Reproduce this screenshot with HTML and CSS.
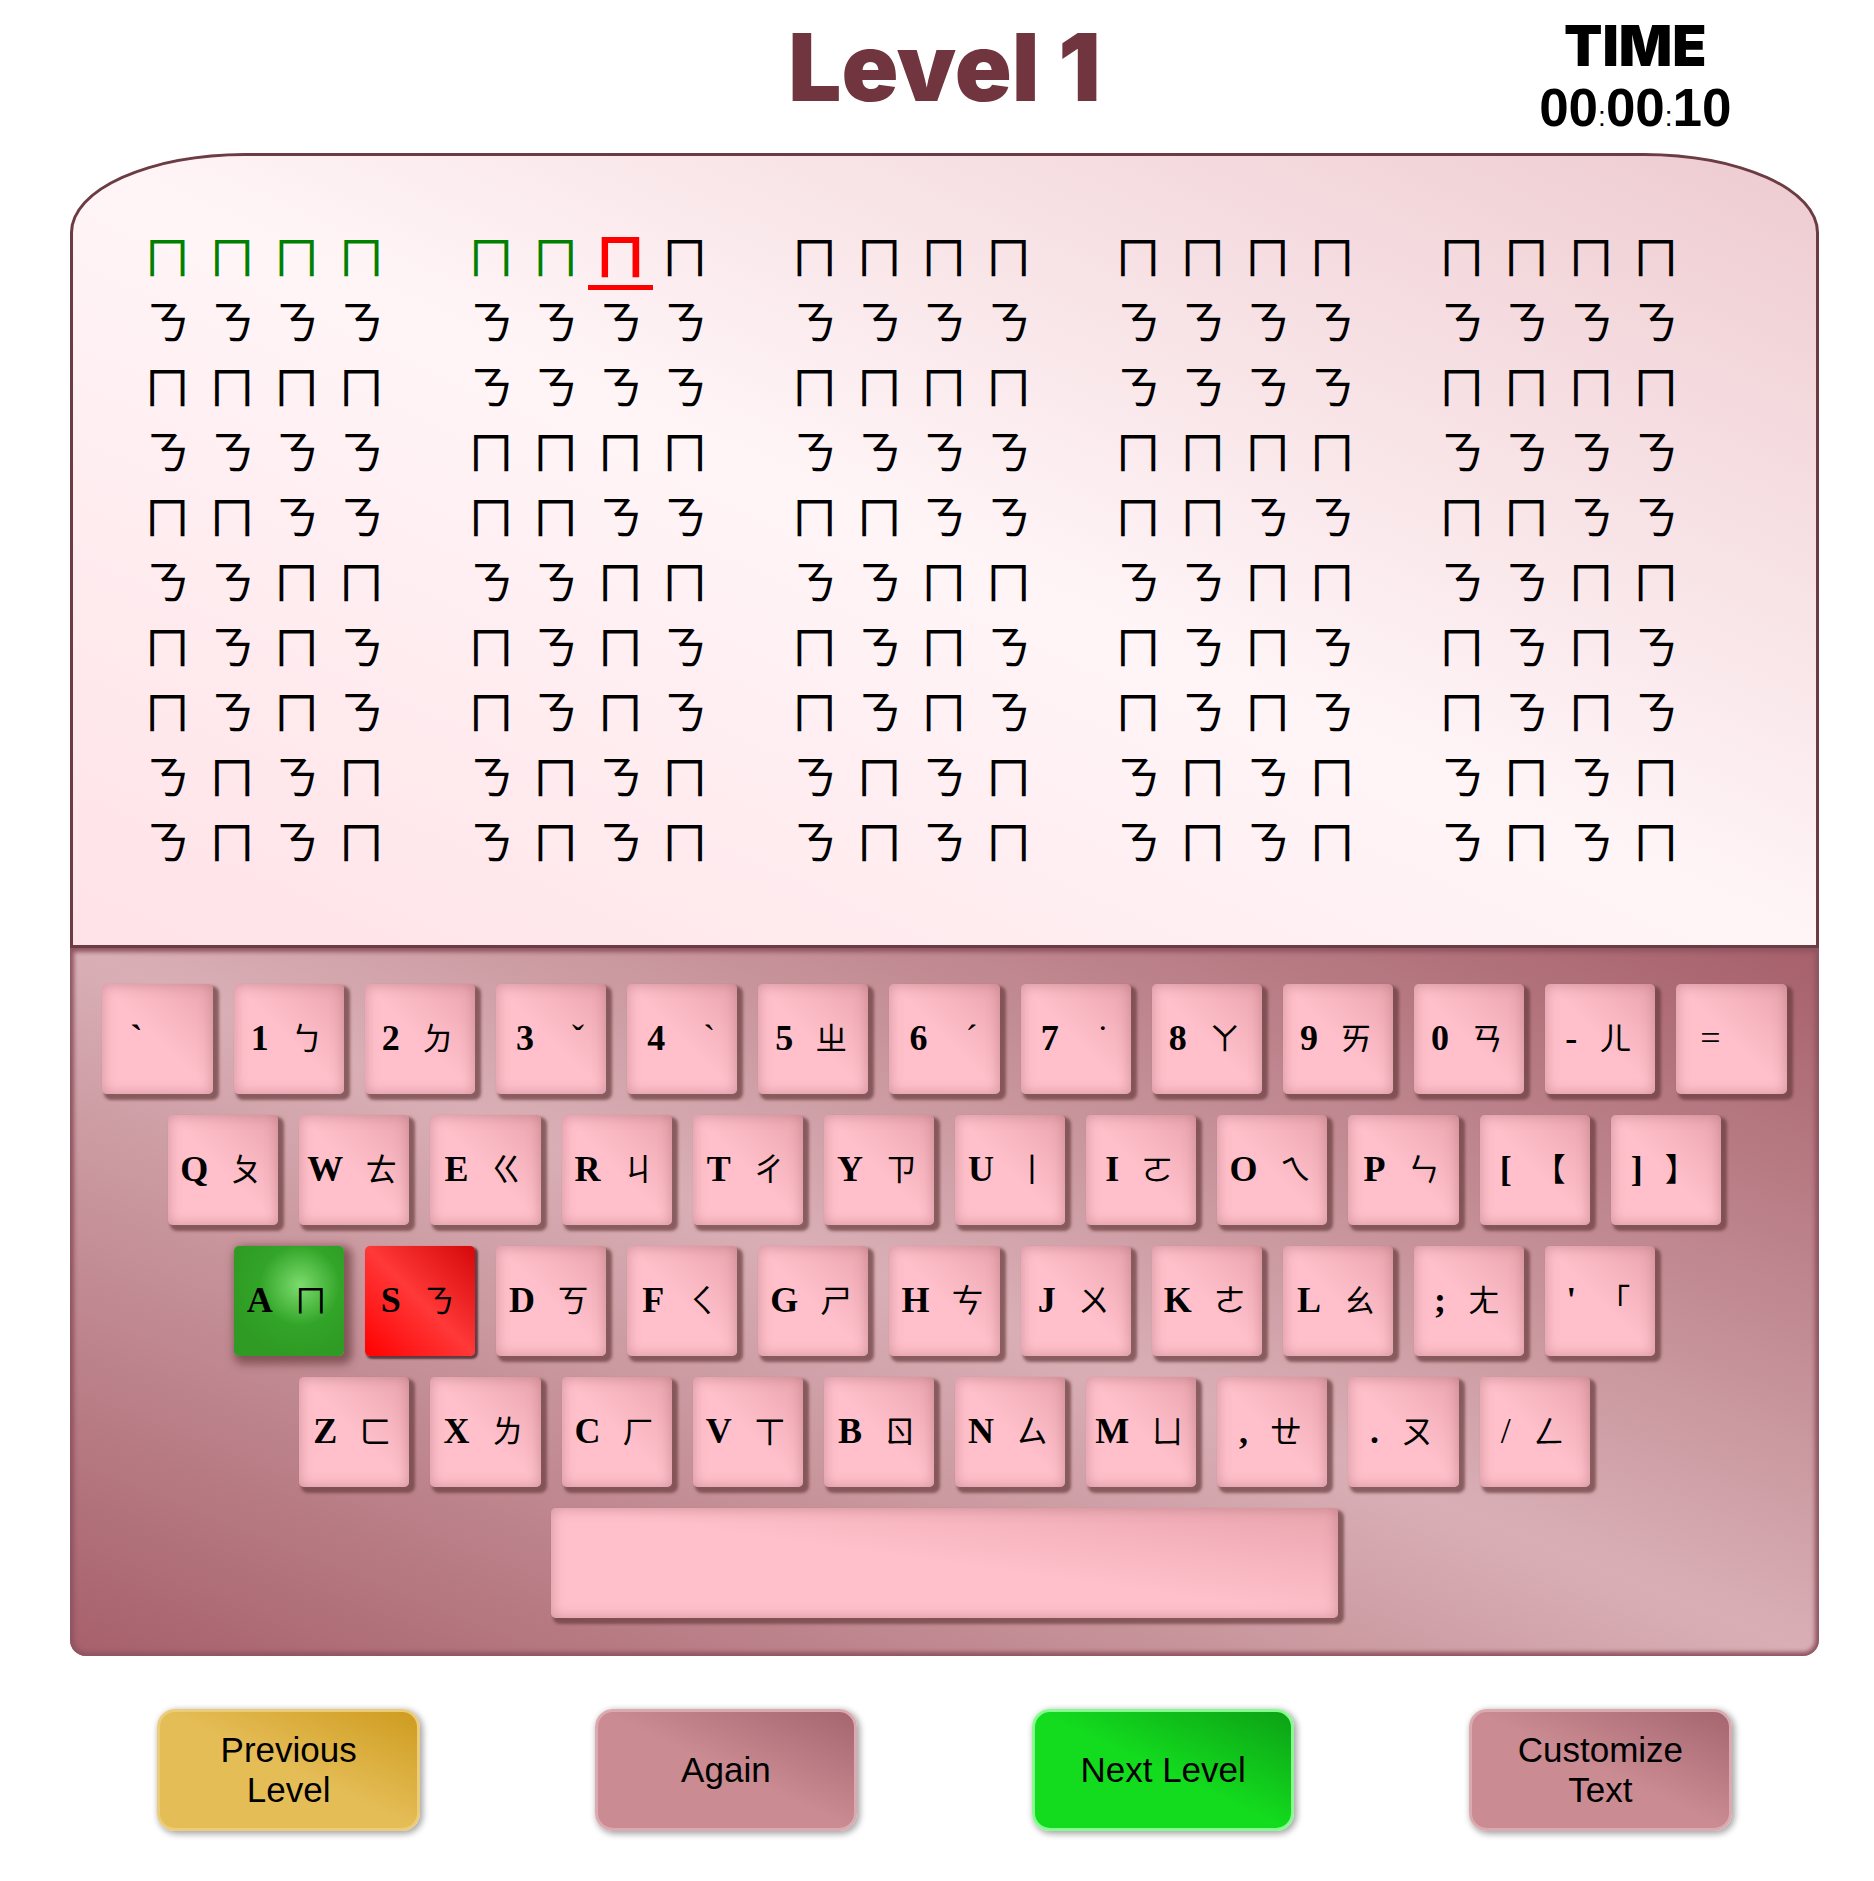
FILE: index.html
```html
<!DOCTYPE html>
<html lang="zh-Hant">
<head>
<meta charset="utf-8">
<title>Level 1</title>
<link rel="stylesheet" href="styles.css">
</head>
<body>
<main class="page">
<header class="top">
<h1 class="title">Level 1</h1>
<div class="timer"><div class="timer-label">TIME</div><div class="timer-value">00<span class="colon">:</span>00<span class="colon">:</span>10</div></div>
</header>
<section class="screen" id="screen"></section>
<section class="keyboard" id="keyboard"></section>
<nav class="actions">
<div class="action"><button class="btn btn-gold" type="button">Previous Level</button></div>
<div class="action"><button class="btn" type="button">Again</button></div>
<div class="action"><button class="btn btn-green" type="button">Next Level</button></div>
<div class="action"><button class="btn" type="button">Customize Text</button></div>
</nav>
</main>
<script src="game.js"></script>
</body>
</html>
```
FILE: styles.css
```css
* { box-sizing: border-box; }
body { margin: 0; background: #fff; color: #000; }
.page { padding: 0 55px 50px 70px; }
.top { display: grid; grid-template-columns: 21% 1fr 21%; height: 153px; }
.title { grid-column: 2; margin: 0; padding-top: 12px; font: 900 94px/110px Inter, "Liberation Sans", sans-serif; color: #70353f; text-align: center; }
.timer { padding-top: 18px; text-align: center; }
.timer-label { font: 900 56px/56px Inter, "Liberation Sans", sans-serif; }
.timer-value { font: bold 53px/68px "Liberation Sans", Arial, sans-serif; }
.colon { font-size: 28px; font-weight: 400; }

.screen { height: 795px; padding: 66px 128px 0 62px; border: 3px solid #6b3c43; border-radius: 10% 10% 0 0; background: linear-gradient(to top right, #ffe2e7, #fff5f7 50%, #eecbd0); }
.line { display: grid; grid-template-columns: repeat(5, 1fr); column-gap: 65px; height: 65px; margin: 0; font: 400 46px/65px "Noto Sans CJK TC", sans-serif; }
.word { display: grid; grid-template-columns: repeat(4, 1fr); text-align: center; }
.done { color: #008000; }
.target { height: 68px; color: #f00; font-weight: 700; font-size: 50px; line-height: 63px; border-bottom: 5px solid #f00; }

.keyboard { display: flex; flex-direction: column; gap: 21px; padding: 36px 0 38px; border-radius: 0 0 16px 16px; background: linear-gradient(to top right, #a6606b, #d9afb5 50%, #a6606b); box-shadow: inset 0 0 4px 4px #8f5560; }
.keys { display: flex; justify-content: center; column-gap: 1.2%; }
.key { display: flex; align-items: center; justify-content: center; gap: 20px; width: 6.3%; height: 110px; padding: 0 2px 2px 0; border: 0; border-radius: 5px; background: linear-gradient(to top right, #ffc0cb 50%, #eaa5ae); box-shadow: 4px 4px 3px 2px rgba(104, 60, 61, .7), inset 0 0 14px rgba(150, 90, 100, .45); color: #000; font: bold 36px/42px "Liberation Serif", "Times New Roman", serif; }
.zh { width: 36px; padding-bottom: 4px; font: 400 32px/42px "Noto Sans CJK TC", sans-serif; }
.tone { width: 30px; padding: 0; font: 400 36px/42px "Liberation Serif", serif; text-align: right; }
.none { width: 20px; }
.plain { font-weight: 400; }
.key-good { background: radial-gradient(circle at 60% 36%, #7ddb6e, #32a528 40px, #2f9b24 70px); box-shadow: 4px 4px 8px 4px rgba(104, 60, 61, .7); }
.key-next { background: linear-gradient(to top right, #f00, #ff3838 50%, #d50808); box-shadow: 2px 2px 2px 1px rgba(60, 30, 35, .75); }
.space { width: 45%; }

.actions { display: grid; grid-template-columns: repeat(4, 1fr); padding-top: 53px; }
.action { text-align: center; }
.btn { width: 60%; height: 122px; padding: 0 40px; border: 3px solid #dbaab1; border-radius: 18px; background: linear-gradient(to top right, #cb8b92 50%, #a3646f) border-box; box-shadow: 2px 2px 6px 1px rgba(0, 0, 0, .35); color: #000; font: 35px/40px "Liberation Sans", Arial, sans-serif; }
.btn-gold { border-color: #ebcc7b; background: linear-gradient(to top right, #e5bd57 50%, #cd9a1d) border-box; }
.btn-green { border-color: #87fb90; background: linear-gradient(to top right, #13db1e 50%, #0c9f15) border-box; }
```
FILE: game.js
```js
const lines = [
  "ㄇㄇㄇㄇ ㄇㄇㄇㄇ ㄇㄇㄇㄇ ㄇㄇㄇㄇ ㄇㄇㄇㄇ",
  "ㄋㄋㄋㄋ ㄋㄋㄋㄋ ㄋㄋㄋㄋ ㄋㄋㄋㄋ ㄋㄋㄋㄋ",
  "ㄇㄇㄇㄇ ㄋㄋㄋㄋ ㄇㄇㄇㄇ ㄋㄋㄋㄋ ㄇㄇㄇㄇ",
  "ㄋㄋㄋㄋ ㄇㄇㄇㄇ ㄋㄋㄋㄋ ㄇㄇㄇㄇ ㄋㄋㄋㄋ",
  "ㄇㄇㄋㄋ ㄇㄇㄋㄋ ㄇㄇㄋㄋ ㄇㄇㄋㄋ ㄇㄇㄋㄋ",
  "ㄋㄋㄇㄇ ㄋㄋㄇㄇ ㄋㄋㄇㄇ ㄋㄋㄇㄇ ㄋㄋㄇㄇ",
  "ㄇㄋㄇㄋ ㄇㄋㄇㄋ ㄇㄋㄇㄋ ㄇㄋㄇㄋ ㄇㄋㄇㄋ",
  "ㄇㄋㄇㄋ ㄇㄋㄇㄋ ㄇㄋㄇㄋ ㄇㄋㄇㄋ ㄇㄋㄇㄋ",
  "ㄋㄇㄋㄇ ㄋㄇㄋㄇ ㄋㄇㄋㄇ ㄋㄇㄋㄇ ㄋㄇㄋㄇ",
  "ㄋㄇㄋㄇ ㄋㄇㄋㄇ ㄋㄇㄋㄇ ㄋㄇㄋㄇ ㄋㄇㄋㄇ"
];
const rows = [
  ["`", "1ㄅ", "2ㄉ", "3ˇ", "4ˋ", "5ㄓ", "6ˊ", "7˙", "8ㄚ", "9ㄞ", "0ㄢ", "-ㄦ", "="],
  ["Qㄆ", "Wㄊ", "Eㄍ", "Rㄐ", "Tㄔ", "Yㄗ", "U丨", "Iㄛ", "Oㄟ", "Pㄣ", "[【", "]】"],
  ["Aㄇ", "Sㄋ", "Dㄎ", "Fㄑ", "Gㄕ", "Hㄘ", "Jㄨ", "Kㄜ", "Lㄠ", ";ㄤ", "'「"],
  ["Zㄈ", "Xㄌ", "Cㄏ", "Vㄒ", "Bㄖ", "Nㄙ", "Mㄩ", ",ㄝ", ".ㄡ", "/ㄥ"]
];
const typed = 6;

function add(parent, tag, className, text) {
  const el = document.createElement(tag);
  if (className) el.className = className;
  if (text) el.textContent = text;
  parent.append(el);
  return el;
}

let position = 0;
for (const text of lines) {
  const line = add(document.getElementById("screen"), "p", "line");
  for (const letters of text.split(" ")) {
    const word = add(line, "span", "word");
    for (const letter of letters) {
      add(word, "span", position < typed ? "done" : position === typed ? "target" : "", letter);
      position++;
    }
  }
}

const keyboard = document.getElementById("keyboard");
for (const row of rows) {
  const keys = add(keyboard, "div", "keys");
  for (const [latin, zh] of row) {
    const state = latin === "A" ? " key-good" : latin === "S" ? " key-next" : "";
    const key = add(keys, "button", "key" + state);
    key.type = "button";
    add(key, "span", "=/".includes(latin) ? "plain" : "", latin);
    add(key, "span", !zh ? "none" : "ˇˋˊ˙".includes(zh) ? "zh tone" : "zh", zh);
  }
}
const space = add(add(keyboard, "div", "keys"), "button", "key space");
space.type = "button";
space.setAttribute("aria-label", "Space");
```
